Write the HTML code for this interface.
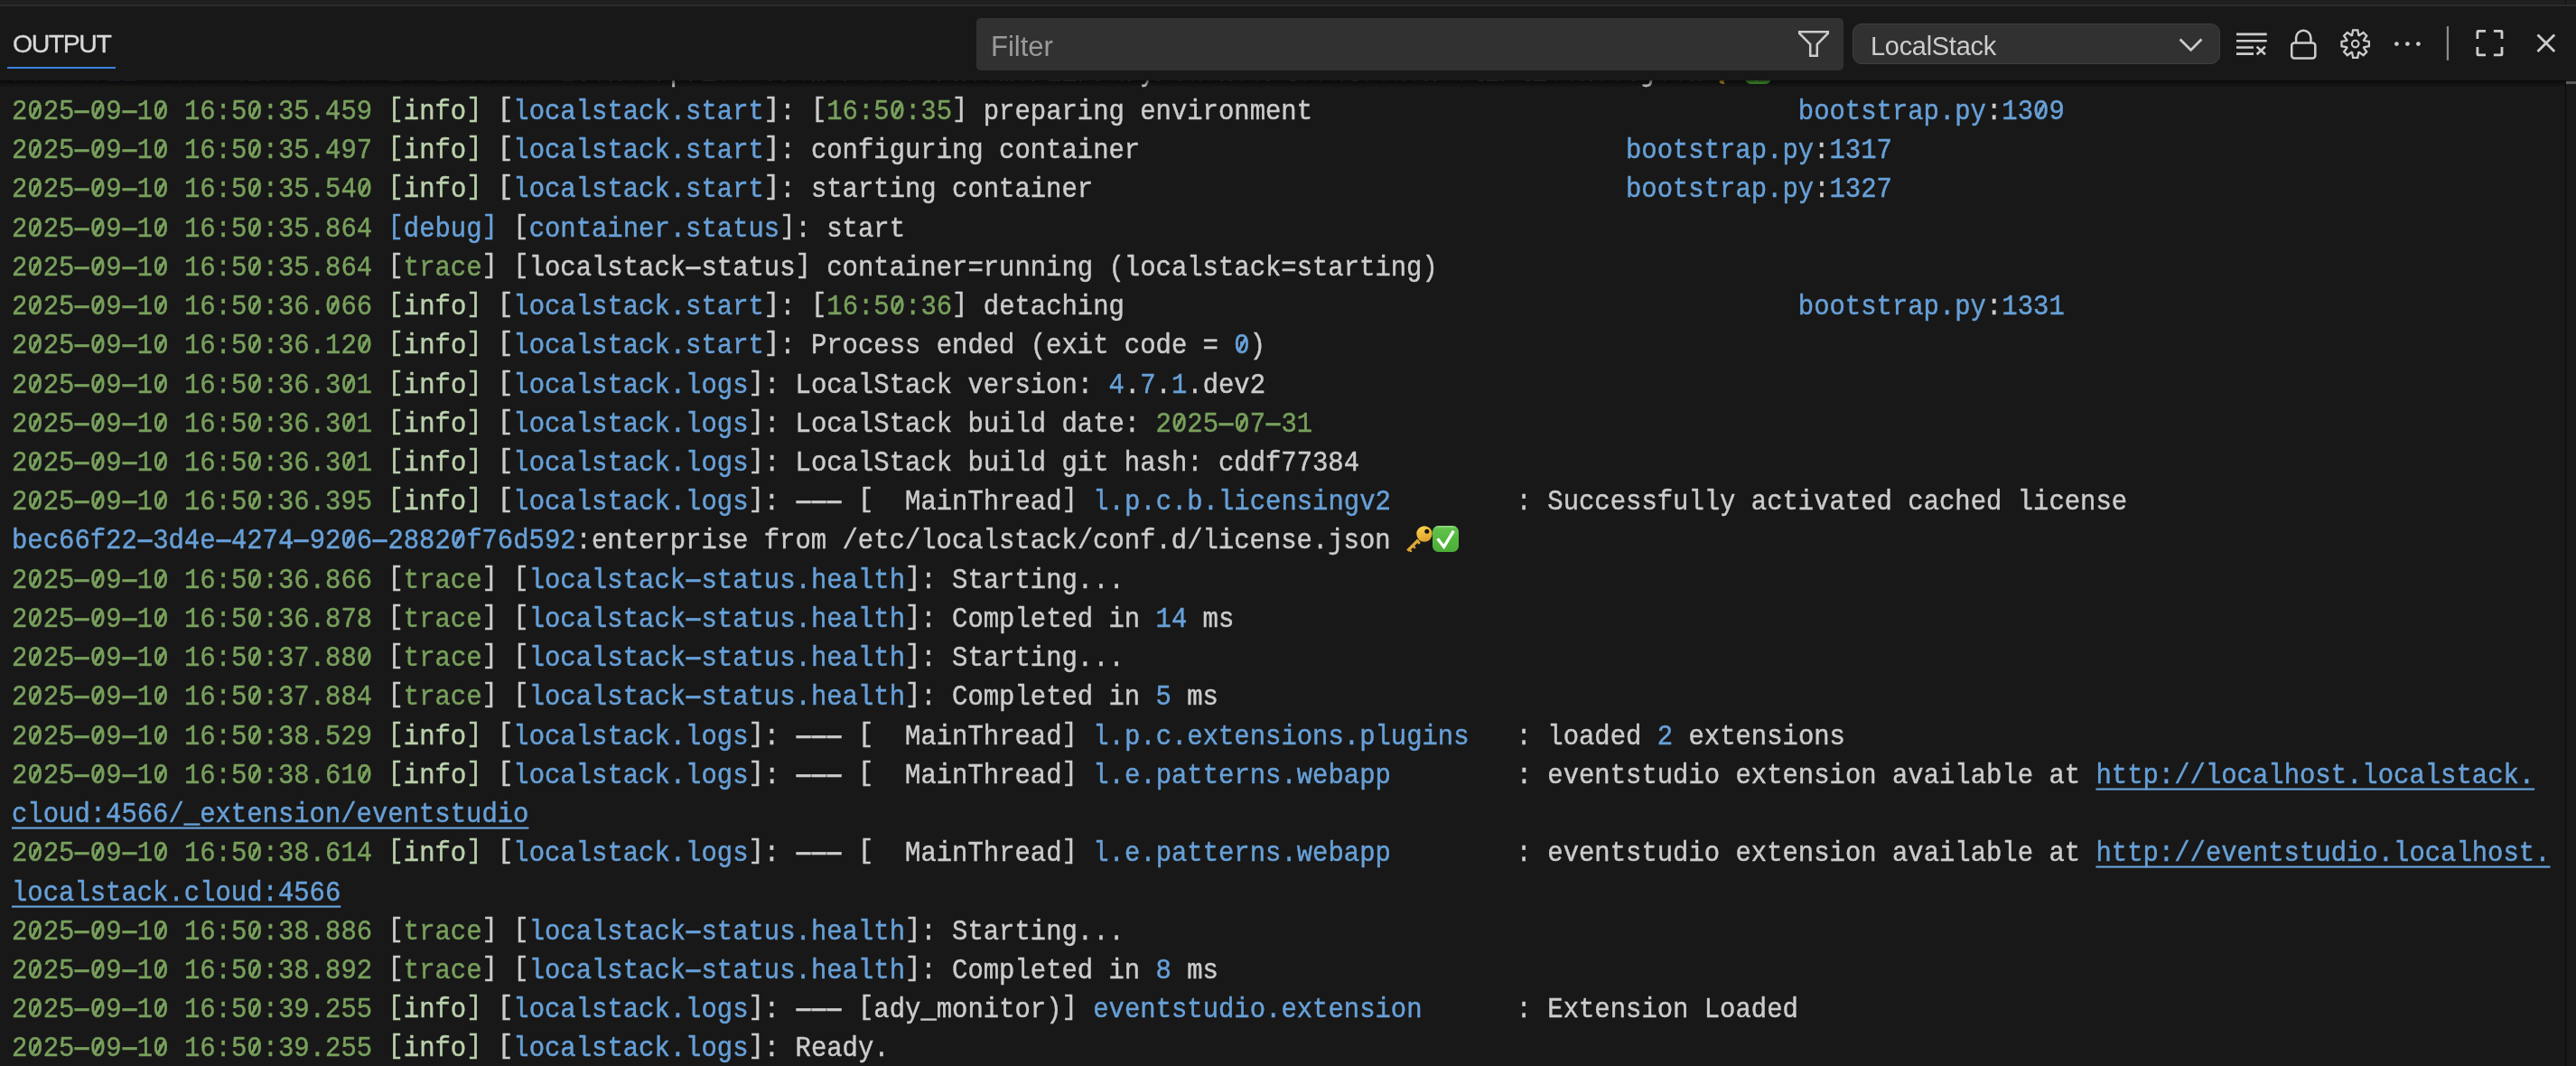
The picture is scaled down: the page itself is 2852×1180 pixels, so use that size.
<!DOCTYPE html>
<html><head><meta charset="utf-8">
<style>
html,body{margin:0;padding:0;}
body{-webkit-font-smoothing:antialiased;width:2852px;height:1180px;overflow:hidden;background:#181818;position:relative;font-family:"Liberation Sans",sans-serif;}
#topstrip{position:absolute;left:0;top:0;width:2852px;height:5px;background:#1f1f1f;}
#topvl{position:absolute;left:2840px;top:0;width:1px;height:5px;background:#111111;}
#border{position:absolute;left:0;top:5px;width:2852px;height:2px;background:#2b2b2b;}
#header{position:absolute;left:0;top:0;width:2852px;height:89px;background:#181818;}
#title{will-change:transform;-webkit-text-stroke-width:0.3px;position:absolute;left:13.5px;top:34px;font-size:28.5px;letter-spacing:-1.45px;color:#d8d8d8;line-height:1;}
#tabline{position:absolute;left:8px;top:74px;width:120px;height:2.4px;background:#3a82e0;}
#filter{position:absolute;left:1081px;top:20px;width:960px;height:57.6px;background:#313131;border-radius:5px;}
#filter .ph{will-change:transform;position:absolute;left:15.5px;top:16px;font-size:31px;color:#9a9a9a;line-height:1;}
#dd{position:absolute;left:2051px;top:26px;width:405px;height:43px;background:#313131;border:1.6px solid #3f3f3f;border-radius:10px;}
#dd .t{will-change:transform;position:absolute;left:19px;top:9.5px;font-size:29px;letter-spacing:-0.3px;color:#cccccc;line-height:1;}
svg.ic{position:absolute;overflow:visible;}
#content{position:absolute;left:0;top:89px;width:2852px;height:1091px;overflow:hidden;}
#rows{position:absolute;left:0;top:-89px;width:2840px;height:1180px;}
.r{position:absolute;left:13px;white-space:pre;font-family:"Liberation Mono",monospace;font-size:28.91px;line-height:43.23px;height:43.23px;color:#cccccc;transform-origin:0 29.3px;transform:scaleY(1.1);will-change:transform;-webkit-text-stroke-width:0.4px;}
.k{font-style:normal;display:inline-block;transform-origin:50% 29.3px;transform:translateY(-3.15px) scaleY(0.904);}
.d{font-style:normal;display:inline-block;transform-origin:50% 22px;transform:scale(1.25,1.3);}
.z{font-weight:normal;display:inline-block;position:relative;}
.z::after{content:'';position:absolute;left:7.45px;top:12.9px;width:2.5px;height:14px;background:currentColor;transform:rotate(31deg);}
.g{color:#78a05c}.l{color:#bad0ac}.b{color:#67a0d8}.w{color:#cccccc}
.u{color:#67a0d8;text-decoration:underline;text-decoration-skip-ink:none;text-decoration-thickness:2px;text-underline-offset:5px;}
.em{position:absolute;width:60px;height:30px;}
.em svg{position:absolute;top:0;}
.em .key{left:0;}
.em .chk{left:29px;}
#shadow{position:absolute;left:0;top:89px;width:2840px;height:7px;background:linear-gradient(#000000a0,#00000000);pointer-events:none;}
#vline{position:absolute;left:2840px;top:89px;width:1px;height:1091px;background:#0c0c0c;}
#thumb{position:absolute;left:2841px;top:90px;width:11px;height:3px;background:#5a5a5a;}
</style></head>
<body>
<div id="content"><div id="rows">
<div class="r" style="top:60.07px"><span class="b">bec66f22<i class="d">–</i>3d4e<i class="d">–</i>4274<i class="d">–</i>92<b class="z">0</b>6<i class="d">–</i>2882<b class="z">0</b>f76d592</span><span class="w">:enterprise from /Users/wsome/Library/Caches/localstack<i class="d">–</i>cli/license.json </span></div>
<div class="r" style="top:102.90px"><span class="g">2<b class="z">0</b>25<i class="d">–</i><b class="z">0</b>9<i class="d">–</i>1<b class="z">0</b> 16:5<b class="z">0</b>:35.459</span><span class="w"> </span><span class="l"><i class="k">[</i>info<i class="k">]</i></span><span class="w"> </span><span class="w"><i class="k">[</i></span><span class="b">localstack.start</span><span class="w"><i class="k">]</i>: </span><span class="w"><i class="k">[</i></span><span class="g">16:5<b class="z">0</b>:35</span><span class="w"><i class="k">]</i> preparing environment</span>                               <span class="b">bootstrap.py</span><span class="w">:</span><span class="b">13<b class="z">0</b>9</span></div>
<div class="r" style="top:146.13px"><span class="g">2<b class="z">0</b>25<i class="d">–</i><b class="z">0</b>9<i class="d">–</i>1<b class="z">0</b> 16:5<b class="z">0</b>:35.497</span><span class="w"> </span><span class="l"><i class="k">[</i>info<i class="k">]</i></span><span class="w"> </span><span class="w"><i class="k">[</i></span><span class="b">localstack.start</span><span class="w"><i class="k">]</i>: </span><span class="w">configuring container</span>                               <span class="b">bootstrap.py</span><span class="w">:</span><span class="b">1317</span></div>
<div class="r" style="top:189.36px"><span class="g">2<b class="z">0</b>25<i class="d">–</i><b class="z">0</b>9<i class="d">–</i>1<b class="z">0</b> 16:5<b class="z">0</b>:35.54<b class="z">0</b></span><span class="w"> </span><span class="l"><i class="k">[</i>info<i class="k">]</i></span><span class="w"> </span><span class="w"><i class="k">[</i></span><span class="b">localstack.start</span><span class="w"><i class="k">]</i>: </span><span class="w">starting container</span>                                  <span class="b">bootstrap.py</span><span class="w">:</span><span class="b">1327</span></div>
<div class="r" style="top:232.59px"><span class="g">2<b class="z">0</b>25<i class="d">–</i><b class="z">0</b>9<i class="d">–</i>1<b class="z">0</b> 16:5<b class="z">0</b>:35.864</span><span class="w"> </span><span class="b"><i class="k">[</i>debug<i class="k">]</i></span><span class="w"> </span><span class="w"><i class="k">[</i></span><span class="b">container.status</span><span class="w"><i class="k">]</i>: start</span></div>
<div class="r" style="top:275.82px"><span class="g">2<b class="z">0</b>25<i class="d">–</i><b class="z">0</b>9<i class="d">–</i>1<b class="z">0</b> 16:5<b class="z">0</b>:35.864</span><span class="w"> </span><span class="w"><i class="k">[</i></span><span class="g">trace</span><span class="w"><i class="k">]</i> </span><span class="w"><i class="k">[</i>localstack<i class="d">–</i>status<i class="k">]</i> container=running (localstack=starting)</span></div>
<div class="r" style="top:319.05px"><span class="g">2<b class="z">0</b>25<i class="d">–</i><b class="z">0</b>9<i class="d">–</i>1<b class="z">0</b> 16:5<b class="z">0</b>:36.<b class="z">0</b>66</span><span class="w"> </span><span class="l"><i class="k">[</i>info<i class="k">]</i></span><span class="w"> </span><span class="w"><i class="k">[</i></span><span class="b">localstack.start</span><span class="w"><i class="k">]</i>: </span><span class="w"><i class="k">[</i></span><span class="g">16:5<b class="z">0</b>:36</span><span class="w"><i class="k">]</i> detaching</span>                                           <span class="b">bootstrap.py</span><span class="w">:</span><span class="b">1331</span></div>
<div class="r" style="top:362.28px"><span class="g">2<b class="z">0</b>25<i class="d">–</i><b class="z">0</b>9<i class="d">–</i>1<b class="z">0</b> 16:5<b class="z">0</b>:36.12<b class="z">0</b></span><span class="w"> </span><span class="l"><i class="k">[</i>info<i class="k">]</i></span><span class="w"> </span><span class="w"><i class="k">[</i></span><span class="b">localstack.start</span><span class="w"><i class="k">]</i>: </span><span class="w">Process ended (exit code = </span><span class="b"><b class="z">0</b></span><span class="w">)</span></div>
<div class="r" style="top:405.51px"><span class="g">2<b class="z">0</b>25<i class="d">–</i><b class="z">0</b>9<i class="d">–</i>1<b class="z">0</b> 16:5<b class="z">0</b>:36.3<b class="z">0</b>1</span><span class="w"> </span><span class="l"><i class="k">[</i>info<i class="k">]</i></span><span class="w"> </span><span class="w"><i class="k">[</i></span><span class="b">localstack.logs</span><span class="w"><i class="k">]</i>: </span><span class="w">LocalStack version: </span><span class="b">4</span><span class="w">.</span><span class="b">7</span><span class="w">.</span><span class="b">1</span><span class="w">.dev2</span></div>
<div class="r" style="top:448.74px"><span class="g">2<b class="z">0</b>25<i class="d">–</i><b class="z">0</b>9<i class="d">–</i>1<b class="z">0</b> 16:5<b class="z">0</b>:36.3<b class="z">0</b>1</span><span class="w"> </span><span class="l"><i class="k">[</i>info<i class="k">]</i></span><span class="w"> </span><span class="w"><i class="k">[</i></span><span class="b">localstack.logs</span><span class="w"><i class="k">]</i>: </span><span class="w">LocalStack build date: </span><span class="g">2<b class="z">0</b>25<i class="d">–</i><b class="z">0</b>7<i class="d">–</i>31</span></div>
<div class="r" style="top:491.97px"><span class="g">2<b class="z">0</b>25<i class="d">–</i><b class="z">0</b>9<i class="d">–</i>1<b class="z">0</b> 16:5<b class="z">0</b>:36.3<b class="z">0</b>1</span><span class="w"> </span><span class="l"><i class="k">[</i>info<i class="k">]</i></span><span class="w"> </span><span class="w"><i class="k">[</i></span><span class="b">localstack.logs</span><span class="w"><i class="k">]</i>: </span><span class="w">LocalStack build git hash: cddf77384</span></div>
<div class="r" style="top:535.20px"><span class="g">2<b class="z">0</b>25<i class="d">–</i><b class="z">0</b>9<i class="d">–</i>1<b class="z">0</b> 16:5<b class="z">0</b>:36.395</span><span class="w"> </span><span class="l"><i class="k">[</i>info<i class="k">]</i></span><span class="w"> </span><span class="w"><i class="k">[</i></span><span class="b">localstack.logs</span><span class="w"><i class="k">]</i>: </span><span class="w"><i class="d">–</i><i class="d">–</i><i class="d">–</i> <i class="k">[</i>  MainThread<i class="k">]</i> </span><span class="b">l.p.c.b.licensingv2</span><span class="w">        : </span><span class="w">Successfully activated cached license</span></div>
<div class="r" style="top:578.43px"><span class="b">bec66f22<i class="d">–</i>3d4e<i class="d">–</i>4274<i class="d">–</i>92<b class="z">0</b>6<i class="d">–</i>2882<b class="z">0</b>f76d592</span><span class="w">:enterprise from /etc/localstack/conf.d/license.json </span></div>
<div class="r" style="top:621.66px"><span class="g">2<b class="z">0</b>25<i class="d">–</i><b class="z">0</b>9<i class="d">–</i>1<b class="z">0</b> 16:5<b class="z">0</b>:36.866</span><span class="w"> </span><span class="w"><i class="k">[</i></span><span class="g">trace</span><span class="w"><i class="k">]</i> </span><span class="w"><i class="k">[</i></span><span class="b">localstack<i class="d">–</i>status.health</span><span class="w"><i class="k">]</i>: </span><span class="w">Starting...</span></div>
<div class="r" style="top:664.89px"><span class="g">2<b class="z">0</b>25<i class="d">–</i><b class="z">0</b>9<i class="d">–</i>1<b class="z">0</b> 16:5<b class="z">0</b>:36.878</span><span class="w"> </span><span class="w"><i class="k">[</i></span><span class="g">trace</span><span class="w"><i class="k">]</i> </span><span class="w"><i class="k">[</i></span><span class="b">localstack<i class="d">–</i>status.health</span><span class="w"><i class="k">]</i>: </span><span class="w">Completed in </span><span class="b">14</span><span class="w"> ms</span></div>
<div class="r" style="top:708.12px"><span class="g">2<b class="z">0</b>25<i class="d">–</i><b class="z">0</b>9<i class="d">–</i>1<b class="z">0</b> 16:5<b class="z">0</b>:37.88<b class="z">0</b></span><span class="w"> </span><span class="w"><i class="k">[</i></span><span class="g">trace</span><span class="w"><i class="k">]</i> </span><span class="w"><i class="k">[</i></span><span class="b">localstack<i class="d">–</i>status.health</span><span class="w"><i class="k">]</i>: </span><span class="w">Starting...</span></div>
<div class="r" style="top:751.35px"><span class="g">2<b class="z">0</b>25<i class="d">–</i><b class="z">0</b>9<i class="d">–</i>1<b class="z">0</b> 16:5<b class="z">0</b>:37.884</span><span class="w"> </span><span class="w"><i class="k">[</i></span><span class="g">trace</span><span class="w"><i class="k">]</i> </span><span class="w"><i class="k">[</i></span><span class="b">localstack<i class="d">–</i>status.health</span><span class="w"><i class="k">]</i>: </span><span class="w">Completed in </span><span class="b">5</span><span class="w"> ms</span></div>
<div class="r" style="top:794.58px"><span class="g">2<b class="z">0</b>25<i class="d">–</i><b class="z">0</b>9<i class="d">–</i>1<b class="z">0</b> 16:5<b class="z">0</b>:38.529</span><span class="w"> </span><span class="l"><i class="k">[</i>info<i class="k">]</i></span><span class="w"> </span><span class="w"><i class="k">[</i></span><span class="b">localstack.logs</span><span class="w"><i class="k">]</i>: </span><span class="w"><i class="d">–</i><i class="d">–</i><i class="d">–</i> <i class="k">[</i>  MainThread<i class="k">]</i> </span><span class="b">l.p.c.extensions.plugins</span><span class="w">   : </span><span class="w">loaded </span><span class="b">2</span><span class="w"> extensions</span></div>
<div class="r" style="top:837.81px"><span class="g">2<b class="z">0</b>25<i class="d">–</i><b class="z">0</b>9<i class="d">–</i>1<b class="z">0</b> 16:5<b class="z">0</b>:38.61<b class="z">0</b></span><span class="w"> </span><span class="l"><i class="k">[</i>info<i class="k">]</i></span><span class="w"> </span><span class="w"><i class="k">[</i></span><span class="b">localstack.logs</span><span class="w"><i class="k">]</i>: </span><span class="w"><i class="d">–</i><i class="d">–</i><i class="d">–</i> <i class="k">[</i>  MainThread<i class="k">]</i> </span><span class="b">l.e.patterns.webapp</span><span class="w">        : </span><span class="w">eventstudio extension available at </span><span class="u">http://localhost.localstack.</span></div>
<div class="r" style="top:881.04px"><span class="u">cloud:4566/_extension/eventstudio</span></div>
<div class="r" style="top:924.27px"><span class="g">2<b class="z">0</b>25<i class="d">–</i><b class="z">0</b>9<i class="d">–</i>1<b class="z">0</b> 16:5<b class="z">0</b>:38.614</span><span class="w"> </span><span class="l"><i class="k">[</i>info<i class="k">]</i></span><span class="w"> </span><span class="w"><i class="k">[</i></span><span class="b">localstack.logs</span><span class="w"><i class="k">]</i>: </span><span class="w"><i class="d">–</i><i class="d">–</i><i class="d">–</i> <i class="k">[</i>  MainThread<i class="k">]</i> </span><span class="b">l.e.patterns.webapp</span><span class="w">        : </span><span class="w">eventstudio extension available at </span><span class="u">http://eventstudio.localhost.</span></div>
<div class="r" style="top:967.50px"><span class="u">localstack.cloud:4566</span></div>
<div class="r" style="top:1010.73px"><span class="g">2<b class="z">0</b>25<i class="d">–</i><b class="z">0</b>9<i class="d">–</i>1<b class="z">0</b> 16:5<b class="z">0</b>:38.886</span><span class="w"> </span><span class="w"><i class="k">[</i></span><span class="g">trace</span><span class="w"><i class="k">]</i> </span><span class="w"><i class="k">[</i></span><span class="b">localstack<i class="d">–</i>status.health</span><span class="w"><i class="k">]</i>: </span><span class="w">Starting...</span></div>
<div class="r" style="top:1053.96px"><span class="g">2<b class="z">0</b>25<i class="d">–</i><b class="z">0</b>9<i class="d">–</i>1<b class="z">0</b> 16:5<b class="z">0</b>:38.892</span><span class="w"> </span><span class="w"><i class="k">[</i></span><span class="g">trace</span><span class="w"><i class="k">]</i> </span><span class="w"><i class="k">[</i></span><span class="b">localstack<i class="d">–</i>status.health</span><span class="w"><i class="k">]</i>: </span><span class="w">Completed in </span><span class="b">8</span><span class="w"> ms</span></div>
<div class="r" style="top:1097.19px"><span class="g">2<b class="z">0</b>25<i class="d">–</i><b class="z">0</b>9<i class="d">–</i>1<b class="z">0</b> 16:5<b class="z">0</b>:39.255</span><span class="w"> </span><span class="l"><i class="k">[</i>info<i class="k">]</i></span><span class="w"> </span><span class="w"><i class="k">[</i></span><span class="b">localstack.logs</span><span class="w"><i class="k">]</i>: </span><span class="w"><i class="d">–</i><i class="d">–</i><i class="d">–</i> <i class="k">[</i>ady_monitor)<i class="k">]</i> </span><span class="b">eventstudio.extension</span><span class="w">      : </span><span class="w">Extension Loaded</span></div>
<div class="r" style="top:1140.42px"><span class="g">2<b class="z">0</b>25<i class="d">–</i><b class="z">0</b>9<i class="d">–</i>1<b class="z">0</b> 16:5<b class="z">0</b>:39.255</span><span class="w"> </span><span class="l"><i class="k">[</i>info<i class="k">]</i></span><span class="w"> </span><span class="w"><i class="k">[</i></span><span class="b">localstack.logs</span><span class="w"><i class="k">]</i>: </span><span class="w">Ready.</span></div>
<div class="em" style="left:1903.39px;top:63.67px"><svg class="key" width="29" height="29" viewBox="0 0 29 29"><defs><linearGradient id="kg" x1="0.2" y1="0" x2="0.6" y2="1"><stop offset="0" stop-color="#fbd54a"/><stop offset="1" stop-color="#dba02e"/></linearGradient></defs><path d="M0.20 26.40 L12.20 14.40 L16.00 18.20 L14.13 17.27 L15.75 18.90 L13.91 20.74 L12.29 19.11 L9.11 22.29 L10.73 23.92 L9.03 25.62 L7.41 23.99 L4.93 26.47 L6.56 28.09 L5.00 29.65 L3.38 28.02 L2.60 28.80 Z" fill="#dea934"/><circle cx="20" cy="9" r="8.7" fill="url(#kg)"/><circle cx="22.8" cy="6.3" r="2.5" fill="#181818"/></svg><svg class="chk" width="30" height="30" viewBox="0 0 30 30"><defs><linearGradient id="cg" x1="0" y1="0" x2="0" y2="1"><stop offset="0" stop-color="#9ee28c"/><stop offset="0.1" stop-color="#62c24c"/><stop offset="0.5" stop-color="#55b93f"/><stop offset="1" stop-color="#4cae37"/></linearGradient></defs><rect x="0" y="0" width="29" height="29" rx="6.5" fill="url(#cg)"/><path d="M5.6 14.2 L12.6 23.4 L23.4 5.6" fill="none" stroke="#ffffff" stroke-width="3.3" stroke-linejoin="miter" stroke-miterlimit="3"/></svg></div>
<div class="em" style="left:1556.53px;top:582.03px"><svg class="key" width="29" height="29" viewBox="0 0 29 29"><defs><linearGradient id="kg" x1="0.2" y1="0" x2="0.6" y2="1"><stop offset="0" stop-color="#fbd54a"/><stop offset="1" stop-color="#dba02e"/></linearGradient></defs><path d="M0.20 26.40 L12.20 14.40 L16.00 18.20 L14.13 17.27 L15.75 18.90 L13.91 20.74 L12.29 19.11 L9.11 22.29 L10.73 23.92 L9.03 25.62 L7.41 23.99 L4.93 26.47 L6.56 28.09 L5.00 29.65 L3.38 28.02 L2.60 28.80 Z" fill="#dea934"/><circle cx="20" cy="9" r="8.7" fill="url(#kg)"/><circle cx="22.8" cy="6.3" r="2.5" fill="#181818"/></svg><svg class="chk" width="30" height="30" viewBox="0 0 30 30"><defs><linearGradient id="cg" x1="0" y1="0" x2="0" y2="1"><stop offset="0" stop-color="#9ee28c"/><stop offset="0.1" stop-color="#62c24c"/><stop offset="0.5" stop-color="#55b93f"/><stop offset="1" stop-color="#4cae37"/></linearGradient></defs><rect x="0" y="0" width="29" height="29" rx="6.5" fill="url(#cg)"/><path d="M5.6 14.2 L12.6 23.4 L23.4 5.6" fill="none" stroke="#ffffff" stroke-width="3.3" stroke-linejoin="miter" stroke-miterlimit="3"/></svg></div>
</div></div>
<div id="shadow"></div>
<div id="vline"></div><div id="thumb"></div>
<div id="header">
  <div id="title">OUTPUT</div>
  <div id="tabline"></div>
  <div id="filter"><div class="ph">Filter</div>
  </div>
  <div id="dd"><div class="t">LocalStack</div></div>
  <svg class="ic" style="left:0;top:0" width="2852" height="89" viewBox="0 0 2852 89">
<g fill="none" stroke="#cccccc" stroke-width="2.5">
<path d="M1992.2 35.2 H2023.8 V37 L2011.8 49 V61.8 H2004.2 V49 L1992.2 37 Z" stroke-linejoin="miter"/>
<path d="M2413.6 43.6 L2425.6 55.4 L2437.4 43.6" stroke-width="2.8"/>
<path d="M2476 37.9 H2509.7 M2476 45.3 H2509.7 M2476 52.5 H2495 M2476 59.6 H2495" stroke-width="2.6"/>
<path d="M2498.6 51.6 L2507.9 60.2 M2507.9 51.6 L2498.6 60.2" stroke-width="2.6"/>
<rect x="2537.2" y="47.4" width="26.1" height="17.2" rx="3"/>
<path d="M2542.1 47.4 V41.8 A8.15 8.15 0 0 1 2558.4 41.8 V47.4"/>
<path d="M2603.80 39.18 L2604.11 39.05 L2605.09 33.42 L2610.31 33.42 L2611.29 39.05 L2611.60 39.18 L2611.91 39.31 L2616.59 36.03 L2620.27 39.71 L2616.99 44.39 L2617.12 44.70 L2617.25 45.01 L2622.88 45.99 L2622.88 51.21 L2617.25 52.19 L2617.12 52.50 L2616.99 52.81 L2620.27 57.49 L2616.59 61.17 L2611.91 57.89 L2611.60 58.02 L2611.29 58.15 L2610.31 63.78 L2605.09 63.78 L2604.11 58.15 L2603.80 58.02 L2603.49 57.89 L2598.81 61.17 L2595.13 57.49 L2598.41 52.81 L2598.28 52.50 L2598.15 52.19 L2592.52 51.21 L2592.52 45.99 L2598.15 45.01 L2598.28 44.70 L2598.41 44.39 L2595.13 39.71 L2598.81 36.03 L2603.49 39.31 Z" stroke-width="2.3" stroke-linejoin="miter"/>
<circle cx="2607.7" cy="48.6" r="3.8" stroke-width="2.1"/>
<path d="M2742.9 43.1 V35.3 Q2742.9 34.3 2743.9 34.3 H2752 M2760.9 34.3 H2769 Q2770 34.3 2770 35.3 V43.1 M2770 51.9 V59.9 Q2770 60.9 2769 60.9 H2760.9 M2752 60.9 H2743.9 Q2742.9 60.9 2742.9 59.9 V51.9" stroke-width="2.8"/>
<path d="M2809.5 38.4 L2828.2 57 M2828.2 38.4 L2809.5 57" stroke-width="2.8"/>
</g>
<g fill="#cccccc"><circle cx="2653.4" cy="48.6" r="2.4"/><circle cx="2665.4" cy="48.6" r="2.4"/><circle cx="2677.4" cy="48.6" r="2.4"/></g>
<rect x="2708.8" y="29.1" width="2.3" height="37.7" fill="#8a8a8a"/>
</svg>
</div>
<div id="topstrip"></div><div id="topvl"></div>
<div id="border"></div>
</body></html>
